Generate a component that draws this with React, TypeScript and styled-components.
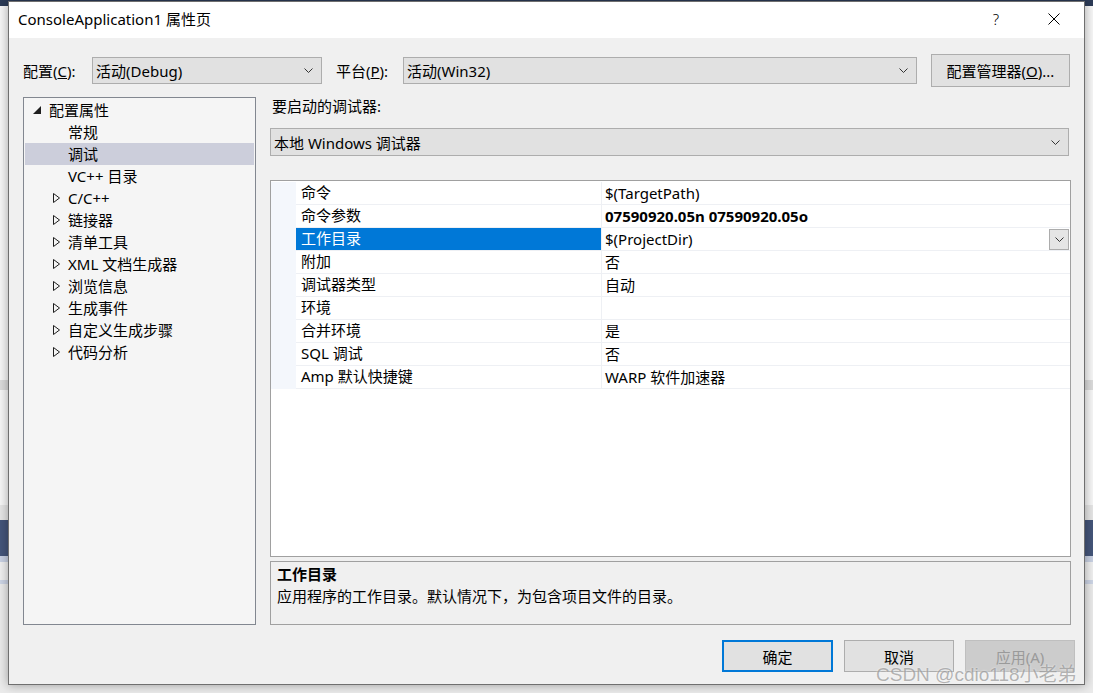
import styled, { createGlobalStyle } from "styled-components";

const GlobalStyle = createGlobalStyle`
  html, body {
    margin: 0;
    padding: 0;
  }
  body {
    font-family: "Noto Sans", "Noto Sans CJK SC", sans-serif;
    font-size: 15px;
    color: #000;
  }
`;

const Desktop = styled.div`
  position: relative;
  width: 1093px;
  height: 693px;
  overflow: hidden;
  display: flex;
  flex-direction: column;
`;

const Band = styled.div<{ $h: number; $c: string }>`
  height: ${(p) => p.$h}px;
  flex-shrink: 0;
  background: ${(p) => p.$c};
`;

const Window = styled.div`
  position: absolute;
  left: 8px;
  top: 1px;
  width: 1077px;
  height: 684px;
  box-sizing: border-box;
  border: 1px solid #6f6f6f;
  background: #f0f0f0;
  box-shadow: 0 0 10px rgba(0, 0, 0, 0.35);
  display: flex;
  flex-direction: column;
`;

const TitleBar = styled.div`
  height: 36px;
  box-sizing: border-box;
  flex-shrink: 0;
  background: #fff;
  display: flex;
  align-items: center;
  padding: 0 7px 3px 9px;
`;

const Title = styled.div`
  flex: 1;
  font-size: 15px;
`;

const TitleButton = styled.div`
  width: 46px;
  height: 30px;
  display: flex;
  align-items: center;
  justify-content: center;
  font-size: 15px;
  font-weight: 300;
  & + & {
    margin-left: 12px;
  }
`;

const Body = styled.div`
  flex: 1;
  display: flex;
  flex-direction: column;
  padding: 16px 13px 0 14px;
`;

const ConfigRow = styled.div`
  height: 33px;
  flex-shrink: 0;
  display: flex;
  align-items: center;
  gap: 14px;
`;

const Label = styled.div<{ $w: number }>`
  width: ${(p) => p.$w}px;
  white-space: nowrap;
`;

const Select = styled.div<{ $w?: number; $h?: number }>`
  width: ${(p) => (p.$w ? `${p.$w}px` : "auto")};
  ${(p) => (p.$w ? "" : "flex: 1;")}
  height: ${(p) => p.$h ?? 27}px;
  flex-shrink: 0;
  box-sizing: border-box;
  border: 1px solid #adadad;
  background: #e1e1e1;
  display: flex;
  align-items: center;
  justify-content: space-between;
  padding: 0 8px 0 3px;
  white-space: nowrap;
`;

const Button = styled.div<{ $w: number; $h?: number; $primary?: boolean; $disabled?: boolean }>`
  width: ${(p) => p.$w}px;
  height: ${(p) => p.$h ?? 32}px;
  box-sizing: border-box;
  border: ${(p) =>
    p.$primary ? "2px solid #0078d7" : p.$disabled ? "1px solid #bfbfbf" : "1px solid #adadad"};
  background: ${(p) => (p.$disabled ? "#cccccc" : "#e1e1e1")};
  color: ${(p) => (p.$disabled ? "#9a9a9a" : "#000")};
  display: flex;
  align-items: center;
  justify-content: center;
  white-space: nowrap;
`;

const Main = styled.div`
  margin-top: 10px;
  height: 528px;
  flex-shrink: 0;
  display: flex;
  gap: 14px;
`;

const Tree = styled.div`
  width: 233px;
  flex-shrink: 0;
  box-sizing: border-box;
  border: 1px solid #828790;
  background: #f5f5f5;
  padding: 1px;
`;

const TreeRow = styled.div<{ $indent: number; $selected?: boolean }>`
  height: 22px;
  display: flex;
  align-items: center;
  gap: 8px;
  padding-left: ${(p) => p.$indent}px;
  background: ${(p) => (p.$selected ? "#cccedb" : "transparent")};
  white-space: nowrap;
  & > span {
    margin-top: -1px;
  }
`;

const RightCol = styled.div`
  flex: 1;
  display: flex;
  flex-direction: column;
`;

const SectionLabel = styled.div`
  height: 18px;
  line-height: 18px;
  margin-bottom: 13px;
  padding-left: 2px;
`;

const Grid = styled.div`
  margin-top: 24px;
  height: 377px;
  box-sizing: border-box;
  border: 1px solid #a0a0a0;
  background: #fff;
  padding-top: 1px;
`;

const GridRow = styled.div`
  height: 23px;
  display: flex;
`;

const Gutter = styled.div`
  width: 25px;
  flex-shrink: 0;
  background: #f4f7fc;
`;

const NameCell = styled.div<{ $selected?: boolean }>`
  width: 305px;
  flex-shrink: 0;
  box-sizing: border-box;
  padding-left: 5px;
  line-height: 21px;
  border-bottom: 1px solid #eef0f4;
  background: ${(p) => (p.$selected ? "#0078d7" : "transparent")};
  color: ${(p) => (p.$selected ? "#fff" : "#000")};
  white-space: nowrap;
`;

const ValueCell = styled.div<{ $bold?: boolean }>`
  flex: 1;
  box-sizing: border-box;
  display: flex;
  align-items: center;
  justify-content: space-between;
  padding-left: 3px;
  padding-right: 1px;
  border-left: 1px solid #eef0f4;
  border-bottom: 1px solid #eef0f4;
  font-weight: ${(p) => (p.$bold ? 700 : 400)};
  white-space: nowrap;
  & > span {
    margin-top: -1px;
  }
`;

const CellDrop = styled.div`
  width: 20px;
  height: 21px;
  box-sizing: border-box;
  border: 1px solid #acacac;
  background: #e5e5e5;
  display: flex;
  align-items: center;
  justify-content: center;
`;

const Desc = styled.div`
  margin-top: 4px;
  height: 64px;
  box-sizing: border-box;
  border: 1px solid #a0a0a0;
  background: #f0f0f0;
  padding: 1px 6px;
  line-height: 22px;
`;

const DescTitle = styled.div`
  font-weight: 700;
`;

const Footer = styled.div`
  margin-top: 15px;
  margin-right: -4px;
  display: flex;
  justify-content: flex-end;
  gap: 11px;
`;

const Watermark = styled.div`
  position: absolute;
  left: 876px;
  top: 659px;
  font-family: "Liberation Sans", "Noto Sans CJK SC", sans-serif;
  font-size: 19px;
  color: rgba(110, 110, 110, 0.5);
  text-shadow: 0 0 2px rgba(255, 255, 255, 0.8);
  white-space: nowrap;
`;

const Chevron = () => (
  <svg width="9" height="5" viewBox="0 0 9 5">
    <path d="M0.5 0.5 L4.5 4.5 L8.5 0.5" fill="none" stroke="#333" strokeWidth="1" />
  </svg>
);

const Expanded = () => (
  <svg width="8" height="8" viewBox="0 0 8 8">
    <path d="M8 0 L8 8 L0 8 Z" fill="#1e1e1e" />
  </svg>
);

const Collapsed = () => (
  <svg width="7" height="10" viewBox="0 0 7 10">
    <path d="M0.5 0.5 L6.5 5 L0.5 9.5 Z" fill="none" stroke="#1e1e1e" strokeWidth="1" />
  </svg>
);

const CloseIcon = () => (
  <svg width="12" height="12" viewBox="0 0 12 12">
    <path d="M0.5 0.5 L11.5 11.5 M11.5 0.5 L0.5 11.5" stroke="#000" strokeWidth="1" />
  </svg>
);

const treeItems = [
  { label: "常规", expander: false },
  { label: "调试", expander: false, selected: true },
  { label: "VC++ 目录", expander: false },
  { label: "C/C++", expander: true },
  { label: "链接器", expander: true },
  { label: "清单工具", expander: true },
  { label: "XML 文档生成器", expander: true },
  { label: "浏览信息", expander: true },
  { label: "生成事件", expander: true },
  { label: "自定义生成步骤", expander: true },
  { label: "代码分析", expander: true },
];

const props = [
  { name: "命令", value: "$(TargetPath)" },
  { name: "命令参数", value: "07590920.05n 07590920.05o", bold: true },
  { name: "工作目录", value: "$(ProjectDir)", selected: true },
  { name: "附加", value: "否" },
  { name: "调试器类型", value: "自动" },
  { name: "环境", value: "" },
  { name: "合并环境", value: "是" },
  { name: "SQL 调试", value: "否" },
  { name: "Amp 默认快捷键", value: "WARP 软件加速器" },
];

const bands: [number, string][] = [
  [6, "#2c3b57"],
  [374, "#f7f7f7"],
  [10, "#dcdcdc"],
  [115, "#f7f7f7"],
  [15, "#e6e6e6"],
  [36, "#44557a"],
  [6, "#c9d1e3"],
  [18, "#f0f0f0"],
  [4, "#cdd5e6"],
  [109, "#ebebeb"],
];

export default function App() {
  return (
    <Desktop>
      <GlobalStyle />
      {bands.map(([h, c], i) => (
        <Band key={i} $h={h} $c={c} />
      ))}
      <Window>
        <TitleBar>
          <Title>ConsoleApplication1 属性页</Title>
          <TitleButton>?</TitleButton>
          <TitleButton>
            <CloseIcon />
          </TitleButton>
        </TitleBar>
        <Body>
          <ConfigRow>
            <Label $w={55}>
              配置(<u>C</u>):
            </Label>
            <Select $w={230}>
              <span>活动(Debug)</span>
              <Chevron />
            </Select>
            <Label $w={53}>
              平台(<u>P</u>):
            </Label>
            <Select $w={514}>
              <span>活动(Win32)</span>
              <Chevron />
            </Select>
            <Button $w={139} $h={33}>
              配置管理器(<u>O</u>)...
            </Button>
          </ConfigRow>
          <Main>
            <Tree>
              <TreeRow $indent={8}>
                <Expanded />
                <span>配置属性</span>
              </TreeRow>
              {treeItems.map((t) => (
                <TreeRow key={t.label} $indent={t.expander ? 28 : 43} $selected={t.selected}>
                  {t.expander && <Collapsed />}
                  <span>{t.label}</span>
                </TreeRow>
              ))}
            </Tree>
            <RightCol>
              <SectionLabel>要启动的调试器:</SectionLabel>
              <Select $h={28} style={{ marginRight: 2 }}>
                <span>本地 Windows 调试器</span>
                <Chevron />
              </Select>
              <Grid>
                {props.map((p) => (
                  <GridRow key={p.name}>
                    <Gutter />
                    <NameCell $selected={p.selected}>{p.name}</NameCell>
                    <ValueCell $bold={p.bold}>
                      <span>{p.value}</span>
                      {p.selected && (
                        <CellDrop>
                          <Chevron />
                        </CellDrop>
                      )}
                    </ValueCell>
                  </GridRow>
                ))}
              </Grid>
              <Desc>
                <DescTitle>工作目录</DescTitle>
                <div>应用程序的工作目录。默认情况下，为包含项目文件的目录。</div>
              </Desc>
            </RightCol>
          </Main>
          <Footer>
            <Button $w={111} $primary>
              确定
            </Button>
            <Button $w={110}>取消</Button>
            <Button $w={110} $disabled>
              应用(A)
            </Button>
          </Footer>
        </Body>
      </Window>
      <Watermark>CSDN @cdio118小老弟</Watermark>
    </Desktop>
  );
}
